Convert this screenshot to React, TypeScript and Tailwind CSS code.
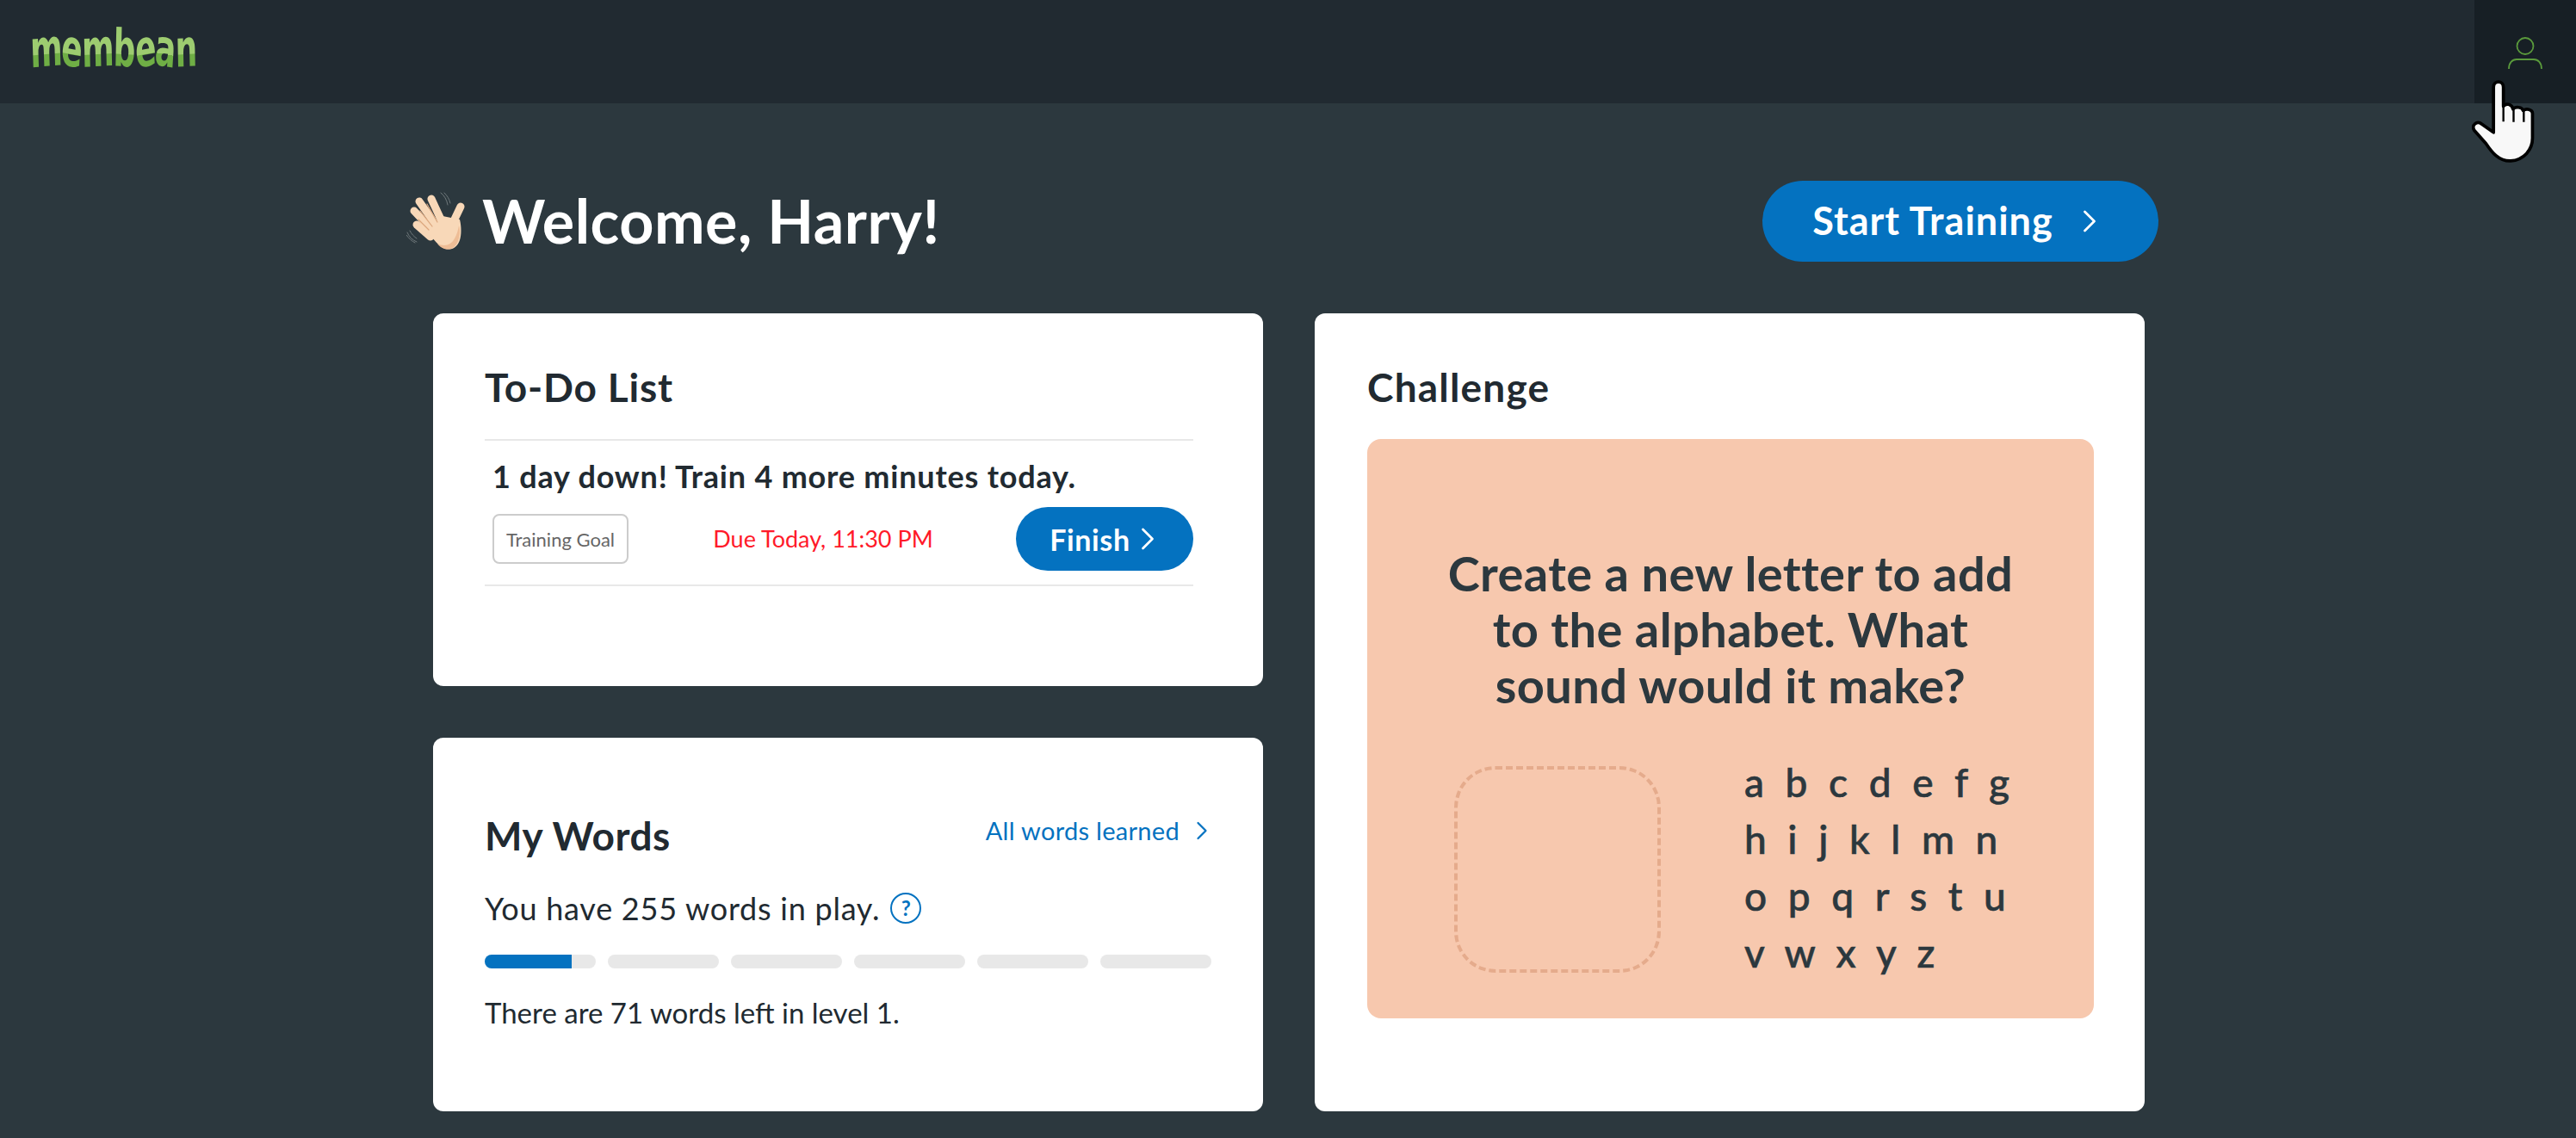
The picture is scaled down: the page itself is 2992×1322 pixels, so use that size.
import { ChevronRight } from "lucide-react";

const letterRows = ["a b c d e f g", "h i j k l m n", "o p q r s t u", "v w x y z"];
const logoLetters = [
  { ch: "m", cls: "-rotate-3" },
  { ch: "e", cls: "rotate-6" },
  { ch: "m", cls: "-rotate-2" },
  { ch: "b", cls: "rotate-2" },
  { ch: "e", cls: "-rotate-6" },
  { ch: "a", cls: "rotate-6" },
  { ch: "n", cls: "-rotate-2" },
];

function WaveEmoji() {
  return (
    <svg width="70" height="68" viewBox="0 0 70 68" className="shrink-0">
      <g fill="none" stroke="#6f787b" strokeWidth="1" strokeLinecap="round">
        <path d="M40 1c4 3 7 8 8 14M44 1c3 3 6 7 7 12" />
        <path d="M1 47c2 5 6 9 11 11M0 50c3 4 6 7 10 9M4 45c2 4 5 7 8 9" />
      </g>
      <g fill="none" stroke="#f8d8b8" strokeWidth="9" strokeLinecap="round">
        <path d="M42 36L29 8" />
        <path d="M34 38L15 11" />
        <path d="M28 42L9 22" />
        <path d="M28 52L12 38" />
        <path d="M53 38L63 17" />
      </g>
      <path d="M24 46L42 28l20 4c2 8 2 18 0 24-3 9-10 12-17 10-7-2-14-12-21-20z" fill="#f8d8b8" />
      <path d="M36 60c8 4 16 2 20-6 3-5 4-10 5-15 2 6 1 13-1 18-3 8-9 11-16 9-3-1-6-3-8-6z" fill="#eebd96" />
      <g fill="none" stroke="#dba67d" strokeWidth="1.2" strokeLinecap="round">
        <path d="M24 14l12 21M16 22l14 18M14 32l12 12" />
      </g>
    </svg>
  );
}

function HandCursor() {
  return (
    <svg
      width="78"
      height="98"
      viewBox="145 280 230 290"
      className="absolute left-[2868px] top-[93px]"
    >
      <path
        d="M228 460V305c0-25 34-25 34 0v65c8-12 30-8 33 10 8-10 32-8 35 5 10-8 32-5 32 10v85c0 40-30 75-75 78-40 2-65-30-85-60l-40-45c-12-18 10-35 25-22z"
        fill="#f8f8f8"
        stroke="#000"
        strokeWidth="11"
        strokeLinejoin="round"
      />
      <path d="M262 368v55M297 382v42M332 386v38" fill="none" stroke="#000" strokeWidth="7" />
    </svg>
  );
}

function Logo() {
  return (
    <div className="ml-[35px] -mt-[8px] flex origin-left scale-x-[0.6] items-end font-['DejaVu_Sans',sans-serif] text-[60px] leading-[70px] font-bold tracking-[-1.5px]">
      {logoLetters.map((l, i) => (
        <span
          key={i}
          className={`inline-block bg-gradient-to-b from-[#9dcc70] from-[60%] to-[#6fae45] to-[60%] bg-clip-text text-transparent ${l.cls}`}
        >
          {l.ch}
        </span>
      ))}
    </div>
  );
}

export default function App() {
  return (
    <div className="relative min-h-[1322px] overflow-hidden bg-[#2c383e] font-['Lato',sans-serif] text-[#212a31]">
      <header className="flex h-[120px] items-center justify-between bg-[#212a31]">
        <Logo />
        <button className="flex h-[120px] w-[118px] items-center justify-center bg-[#171f25] pt-[3px]">
          <svg width="40" height="38" viewBox="0 0 40 38" fill="none" stroke="#5a9a3c" strokeWidth="1.8">
            <circle cx="20" cy="10.5" r="9.5" />
            <path d="M1 37c0-7 4-11 9-11h20c5 0 9 4 9 11" />
          </svg>
        </button>
      </header>

      <main className="mx-auto w-[1990px] pl-[2px]">
        <div className="-mr-[16px] -ml-[31px] flex h-[244px] items-center justify-between pt-[30px]">
          <div className="flex items-center gap-[18px]">
            <WaveEmoji />
            <h1 className="-mt-[2px] text-[70px] leading-none font-bold tracking-[0.5px] text-white">Welcome, Harry!</h1>
          </div>
          <button className="flex h-[94px] w-[460px] items-center justify-center gap-[20px] rounded-full bg-[#0472c0] text-[45px] font-bold tracking-[1px] text-white">
            Start Training
            <ChevronRight size={44} strokeWidth={1.5} />
          </button>
        </div>

        <div className="grid grid-cols-[964px_964px] gap-[60px]">
          <div className="flex flex-col gap-[60px]">
            <section className="h-[433px] rounded-xl bg-white px-[60px] pt-[58px]">
              <h2 className="text-[46px] leading-[56px] font-bold tracking-[0.8px]">To-Do List</h2>
              <div className="mt-[32px] w-[823px] border-y-2 border-[#e8e8e8] px-[9px] pt-[19px] pb-[16px]">
                <p className="text-[36px] leading-[44px] font-bold tracking-[0.8px]">1 day down! Train 4 more minutes today.</p>
                <div className="-mr-[9px] mt-[14px] flex items-center justify-between">
                  <span className="flex h-[58px] w-[158px] items-center justify-center rounded-lg border-2 border-[#cccccc] text-[22px] text-[#666666]">
                    Training Goal
                  </span>
                  <span className="ml-[2px] text-[27px] text-[#ff1a2a]">Due Today, 11:30 PM</span>
                  <button className="flex h-[74px] w-[206px] items-center justify-center rounded-full bg-[#0472c0] pl-[8px] text-[34px] font-bold tracking-[0.6px] text-white">
                    Finish
                    <ChevronRight size={44} strokeWidth={1.5} className="-ml-[2px]" />
                  </button>
                </div>
              </div>
            </section>

            <section className="h-[434px] rounded-xl bg-white px-[60px] pt-[86px]">
              <div className="-mr-[7px] flex items-start justify-between">
                <h2 className="text-[46px] leading-[56px] font-bold tracking-[0.5px]">My Words</h2>
                <a className="flex items-center gap-[8px] text-[29px] leading-[44px] tracking-[0.3px] text-[#0472c0]">
                  All words learned
                  <ChevronRight size={36} strokeWidth={1.5} />
                </a>
              </div>
              <div className="mt-[32px] flex items-center gap-[12px]">
                <p className="text-[36px] leading-[48px] tracking-[0.75px]">You have 255 words in play.</p>
                <span className="flex h-[36px] w-[36px] items-center justify-center rounded-full border-2 border-[#0472c0] text-[24px] leading-none font-bold text-[#0472c0]">
                  ?
                </span>
              </div>
              <div className="mt-[30px] flex w-[844px] gap-[14px]">
                <div className="h-[16px] flex-1 overflow-hidden rounded-full bg-[#e8e8e8]">
                  <div className="h-full bg-[#0472c0]" style={{ width: "78%" }} />
                </div>
                <div className="h-[16px] flex-1 rounded-full bg-[#e8e8e8]" />
                <div className="h-[16px] flex-1 rounded-full bg-[#e8e8e8]" />
                <div className="h-[16px] flex-1 rounded-full bg-[#e8e8e8]" />
                <div className="h-[16px] flex-1 rounded-full bg-[#e8e8e8]" />
                <div className="h-[16px] flex-1 rounded-full bg-[#e8e8e8]" />
              </div>
              <p className="mt-[30px] text-[33px] leading-[42px]">There are 71 words left in level 1.</p>
            </section>
          </div>

          <section className="h-[927px] rounded-xl bg-white px-[61px] pt-[58px]">
            <h2 className="text-[46px] leading-[56px] font-bold tracking-[1.2px]">Challenge</h2>
            <div className="mt-[32px] h-[673px] w-[844px] rounded-2xl bg-[#f7c8ae] px-[85px] pt-[123px] text-[#2c383e]">
              <p className="text-center text-[56px] leading-[65px] font-bold tracking-[0.4px]">
                Create a new letter to add to the alphabet. What sound would it make?
              </p>
              <div className="mt-[62px] ml-[16px] flex items-start">
                <div className="h-[240px] w-[240px] rounded-[48px] border-4 border-dashed border-[#e5ab8c]" />
                <div className="-mt-[14px] ml-[97px] text-[46px] leading-[66px] font-medium tracking-[0.5px] [word-spacing:12px] [-webkit-text-stroke:0.6px_#2c383e]">
                  {letterRows.map((row) => (
                    <div key={row}>{row}</div>
                  ))}
                </div>
              </div>
            </div>
          </section>
        </div>
      </main>

      <HandCursor />
    </div>
  );
}
